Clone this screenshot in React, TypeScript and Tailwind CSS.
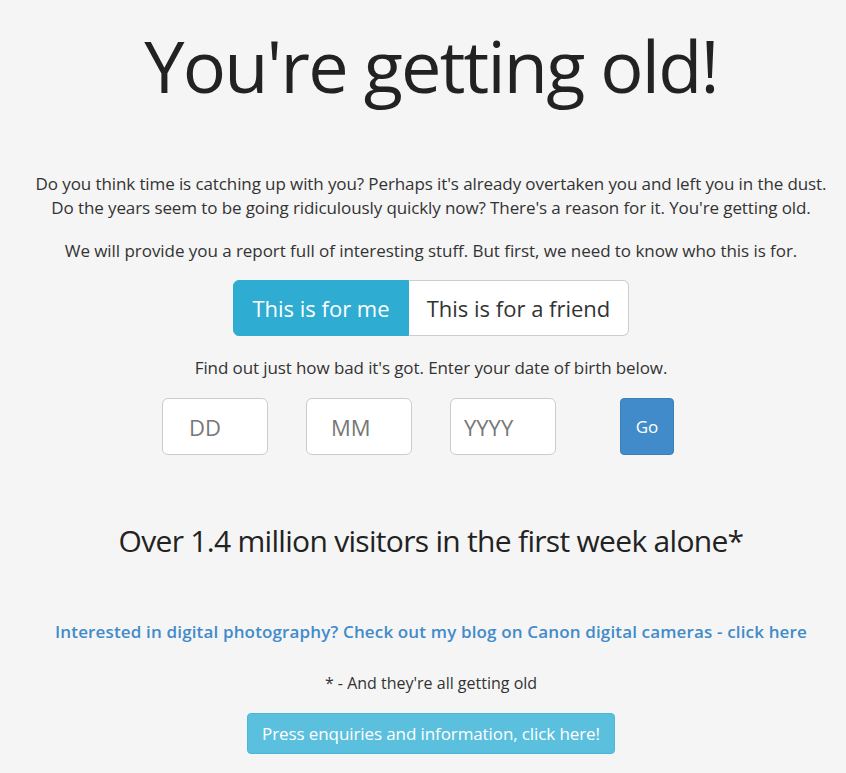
import React, { useState } from 'react';

const font = { fontFamily: '"Open Sans", "Noto Sans", sans-serif' };

export default function App() {
  const [forMe, setForMe] = useState(true);

  return (
    <div className="min-h-[773px] bg-[#f5f5f5] text-[#333] text-center pl-[16px]" style={font}>
      <div className="pt-[20px]">
        <h1 className="text-[72px] leading-[90px] text-[#222] tracking-[-1.8px]">You're getting old!</h1>

        <div className="mt-[62px] text-[17px] leading-[24px] tracking-[-0.1px]">
          <p>Do you think time is catching up with you? Perhaps it's already overtaken you and left you in the dust.</p>
          <p>Do the years seem to be going ridiculously quickly now? There's a reason for it. You're getting old.</p>
        </div>

        <p className="mt-[19px] text-[17px] leading-[24px] tracking-[-0.05px]">
          We will provide you a report full of interesting stuff. But first, we need to know who this is for.
        </p>

        <div className="mt-[17px] flex justify-center">
          <div className="flex h-[56px] text-[22px]">
            <button
              onClick={() => setForMe(true)}
              className={`w-[176px] rounded-l-[6px] border ${forMe ? 'bg-[#2eacd2] border-[#2eacd2] text-white' : 'bg-white border-[#ccc] text-[#333]'}`}
            >
              This is for me
            </button>
            <button
              onClick={() => setForMe(false)}
              className={`w-[220px] rounded-r-[6px] border border-l-0 ${!forMe ? 'bg-[#2eacd2] border-[#2eacd2] text-white' : 'bg-white border-[#ccc] text-[#333]'}`}
            >
              This is for a friend
            </button>
          </div>
        </div>

        <p className="mt-[20px] text-[17px] leading-[24px] tracking-[-0.1px]">
          Find out just how bad it's got. Enter your date of birth below.
        </p>

        <div className="mt-[18px] flex justify-center">
          <div className="flex ml-[-26px]">
            <input
              placeholder="DD"
              className="w-[106px] h-[57px] rounded-[6px] border border-[#ccc] bg-white px-[26px] text-[22px] placeholder:text-[#777] outline-none"
            />
            <input
              placeholder="MM"
              className="ml-[38px] w-[106px] h-[57px] rounded-[6px] border border-[#ccc] bg-white px-[24px] text-[22px] placeholder:text-[#777] outline-none"
            />
            <input
              placeholder="YYYY"
              className="ml-[38px] w-[106px] h-[57px] rounded-[6px] border border-[#ccc] bg-white px-[13px] text-[22px] placeholder:text-[#777] outline-none"
            />
            <button className="ml-[64px] w-[54px] h-[57px] rounded-[4px] bg-[#428bca] border border-[#3a7fba] text-white text-[17px]">
              Go
            </button>
          </div>
        </div>

        <h2 className="mt-[66px] text-[30px] leading-[40px] tracking-[-0.7px] text-[#222]">
          Over 1.4 million visitors in the first week alone*
        </h2>

        <a href="#" className="mt-[59px] block text-[17px] leading-[24px] font-semibold text-[#428bca] tracking-[0.15px]">
          Interested in digital photography? Check out my blog on Canon digital cameras - click here
        </a>

        <p className="mt-[28px] text-[16px] leading-[22px]">* - And they're all getting old</p>

        <div className="mt-[19px] flex justify-center">
          <button className="w-[368px] h-[41px] rounded-[4px] bg-[#5bc0de] border border-[#46b8da] text-white text-[17px] tracking-[-0.1px]">
            Press enquiries and information, click here!
          </button>
        </div>
      </div>
    </div>
  );
}
